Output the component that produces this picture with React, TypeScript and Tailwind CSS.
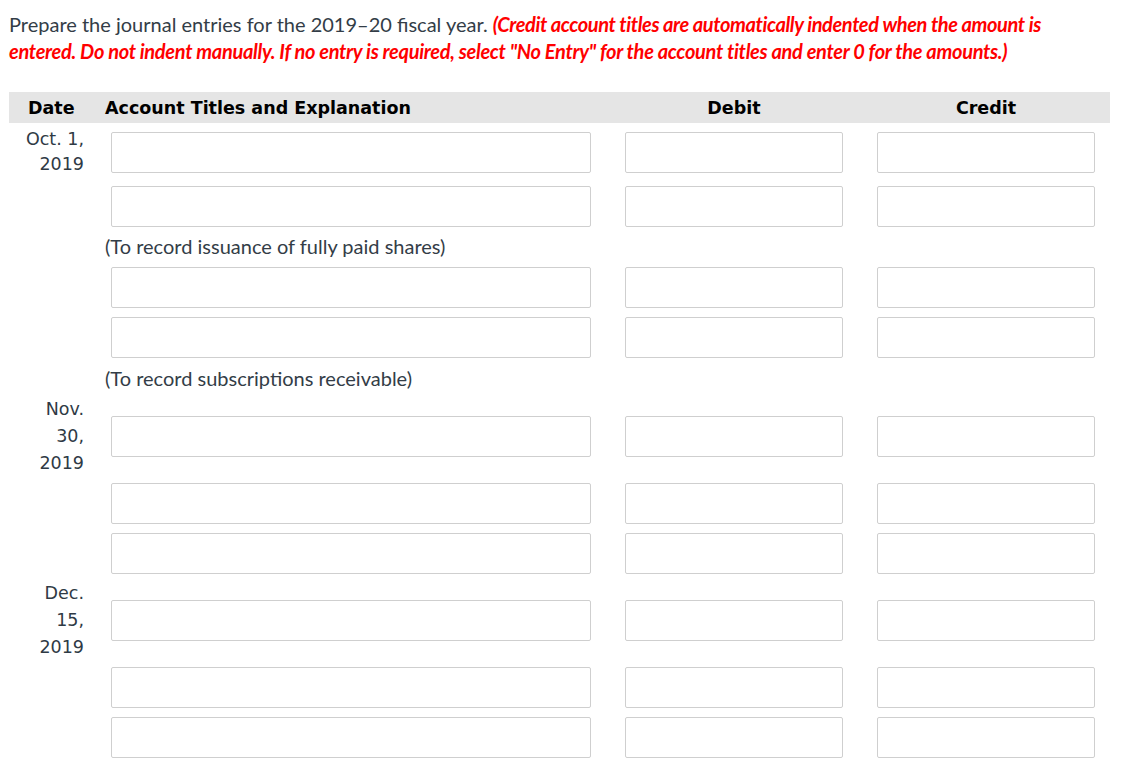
import React from "react";

const tf = { fontFamily: '"DejaVu Sans", sans-serif' };

function Box({ w }: { w: string }) {
  return <div className={`${w} h-[41px] border border-[#cfcfcf] rounded-[2px] bg-white`} />;
}

function EntryRow({ date, h, lh = "leading-[27px]" }: { date?: string[]; h: string; lh?: string }) {
  return (
    <div className={`flex items-center ${h}`}>
      <div className={`w-[86px] pr-[11px] text-right text-[17.5px] ${lh} text-[#2f3a45]`} style={tf}>
        {date?.map((d, i) => <div key={i}>{d}</div>)}
      </div>
      <div className="w-[510px] pl-[16px] pr-[15px]"><Box w="w-[480px]" /></div>
      <div className="w-[255px] pl-[20px]"><Box w="w-[218px]" /></div>
      <div className="w-[250px] pl-[17px]"><Box w="w-[218px]" /></div>
    </div>
  );
}

function Expl({ text, h }: { text: string; h: string }) {
  return (
    <div className={`flex items-center ${h}`}>
      <div className="w-[86px]" />
      <div className="pl-[10px] text-[20px] leading-[27px] text-[#333d47]" style={{ fontFamily: "Lato, sans-serif" }}>{text}</div>
    </div>
  );
}

export default function App() {
  return (
    <div className="bg-white w-[1133px] h-[765px] overflow-hidden">
      <div className="pl-[9px] pt-[11px] text-[20px] leading-[27px] text-[#333d47]" style={{ fontFamily: "Lato, sans-serif" }}>
        <div>
          Prepare the journal entries for the 2019–20 fiscal year.{" "}
          <span className="text-[#ff0000] italic font-bold tracking-[-0.4px]">
            (Credit account titles are automatically indented when the amount is
          </span>
        </div>
        <div className="text-[#ff0000] italic font-bold tracking-[-0.3px]">
          entered. Do not indent manually. If no entry is required, select "No Entry" for the account titles and enter 0 for the amounts.)
        </div>
      </div>
      <div className="ml-[9px] mt-[27px] w-[1101px]">
        <div className="flex items-center h-[31px] pt-[1px] bg-[#e5e5e5] text-[17.5px] font-bold text-black" style={tf}>
          <div className="w-[86px] pl-[19px]">Date</div>
          <div className="w-[510px] pl-[10px]">Account Titles and Explanation</div>
          <div className="w-[255px] pl-[20px] text-center"><div className="w-[218px]">Debit</div></div>
          <div className="w-[250px] pl-[17px] text-center"><div className="w-[218px]">Credit</div></div>
        </div>
        <EntryRow date={["Oct. 1,", "2019"]} h="h-[58px]" lh="leading-[25px]" />
        <EntryRow h="h-[50px]" />
        <Expl text="(To record issuance of fully paid shares)" h="h-[31px]" />
        <EntryRow h="h-[50px]" />
        <EntryRow h="h-[50px]" />
        <Expl text="(To record subscriptions receivable)" h="h-[32px]" />
        <EntryRow date={["Nov.", "30,", "2019"]} h="h-[84px]" />
        <EntryRow h="h-[50px]" />
        <EntryRow h="h-[50px]" />
        <EntryRow date={["Dec.", "15,", "2019"]} h="h-[84px]" />
        <EntryRow h="h-[50px]" />
        <EntryRow h="h-[50px]" />
      </div>
    </div>
  );
}
